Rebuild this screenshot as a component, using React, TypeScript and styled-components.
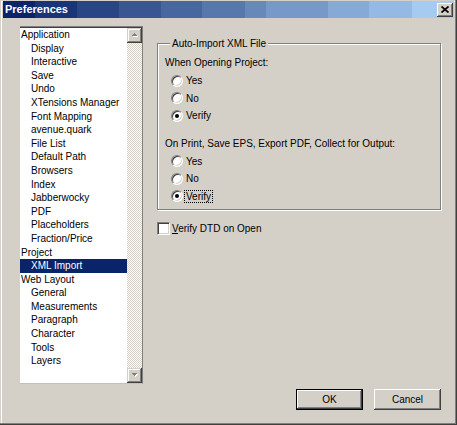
import React from 'react';
import styled, { createGlobalStyle } from 'styled-components';

const GlobalStyle = createGlobalStyle`
    html, body {
        margin: 0;
        padding: 0;
        background: #d4d0c8;
    }
    body {
        font-family: "Liberation Sans", Arial, sans-serif;
        font-size: 10px;
        color: #000;
    }
`;

const Window = styled.div`
    width: 457px;
    height: 425px;
    box-sizing: border-box;
    padding: 1px 3px 3px 3px;
    display: flex;
    flex-direction: column;
    background: #d4d0c8;
    box-shadow: inset -1px -1px #404040, inset -2px -2px #808080, inset 1px 1px #d4d0c8, inset 2px 2px #fff;
`;

// the title bar fades in visible steps, like a 16-bit colour screen
const TitleBar = styled.div`
    height: 17px;
    flex: none;
    display: flex;
    align-items: center;
    justify-content: space-between;
    padding: 0 1px 0 2px;
    background: linear-gradient(
        to right,
        #0a246a 0 32px,
        #1a3577 32px 74px,
        #294585 74px 116px,
        #395692 116px 158px,
        #4866a0 158px 199px,
        #5877ad 199px 242px,
        #6888ba 242px 263px,
        #7798c8 263px 325px,
        #87a9d5 325px 366px,
        #96b9e3 366px 409px,
        #a6caf0 409px
    );
`;

const Title = styled.span`
    color: #fff;
    font-weight: bold;
    font-size: 11px;
    line-height: 17px;
`;

const CloseButton = styled.div`
    width: 16px;
    height: 14px;
    display: flex;
    align-items: center;
    justify-content: center;
    background: #d4d0c8;
    box-shadow: inset -1px -1px #404040, inset 1px 1px #fff, inset -2px -2px #808080;
`;

const Main = styled.div`
    display: flex;
    margin-top: 8px;
    padding-left: 17px;
`;

const ListBox = styled.div`
    width: 123px;
    height: 358px;
    box-sizing: border-box;
    display: flex;
    border-top: 1px solid #808080;
    border-right: 1px solid #808080;
    border-bottom: 1px solid #c0c0c0;
    box-shadow: inset 0 1px #404040;
`;

const ListArea = styled.div`
    flex: 1;
    margin-top: 1px;
    background: #fff;
    overflow: hidden;
`;

const ListItem = styled.div<{ $level: number; $selected?: boolean }>`
    height: 13.6px;
    line-height: 13.6px;
    padding-left: ${(p) => 1 + p.$level * 10}px;
    white-space: nowrap;
    background: ${(p) => (p.$selected ? '#0a246a' : 'transparent')};
    color: ${(p) => (p.$selected ? '#fff' : '#000')};
`;

const ScrollBar = styled.div`
    width: 15px;
    margin-top: 1px;
    display: flex;
    flex-direction: column;
`;

const ScrollTrack = styled.div`
    flex: 1;
    background: repeating-conic-gradient(#fff 0 25%, #d4d0c8 0 50%) 0 0 / 2px 2px;
`;

const ScrollButton = styled.div`
    height: 15px;
    display: flex;
    align-items: center;
    justify-content: center;
    background: #d4d0c8;
    box-shadow: inset -1px -1px #404040, inset 1px 1px #d4d0c8, inset -2px -2px #808080, inset 2px 2px #fff;
`;

const RightPanel = styled.div`
    width: 284px;
    margin-left: 14px;
    display: flex;
    flex-direction: column;
`;

const GroupBox = styled.fieldset`
    margin: 11.5px 0 0 0;
    padding: 4.5px 0 4px 7px;
    min-width: 0;
    border: 1px solid #808080;
    box-shadow: inset 1px 1px #fff, 1px 1px #fff;
    display: flex;
    flex-direction: column;
`;

const Legend = styled.legend`
    margin-left: 5px;
    padding: 0 2px;
    line-height: 12px;
    background: #d4d0c8;
`;

const Caption = styled.div<{ $gap?: number }>`
    height: 18px;
    line-height: 18px;
    margin-top: ${(p) => p.$gap ?? 0}px;
`;

const RadioRow = styled.div`
    height: 17.5px;
    display: flex;
    align-items: center;
    padding-left: 6px;
`;

const RadioCircle = styled.span<{ $checked?: boolean }>`
    width: 12px;
    height: 12px;
    box-sizing: border-box;
    border-radius: 50%;
    border: 1px solid;
    border-color: #808080 #fff #fff #808080;
    box-shadow: inset 1px 1px #404040, inset -1px -1px #d4d0c8;
    background: #fff;
    display: flex;
    align-items: center;
    justify-content: center;
    flex: none;

    &::after {
        content: '';
        width: 4px;
        height: 4px;
        border-radius: 50%;
        background: ${(p) => (p.$checked ? '#000' : 'transparent')};
    }
`;

const OptionLabel = styled.span<{ $focused?: boolean }>`
    margin-left: 1px;
    padding: 0 1px;
    line-height: 11px;
    border: 1px ${(p) => (p.$focused ? 'dotted #000' : 'solid transparent')};
`;

const CheckRow = styled.div`
    height: 14px;
    margin-top: 11px;
    display: flex;
    align-items: center;
    gap: 2px;
`;

const CheckBox = styled.span`
    width: 13px;
    height: 13px;
    box-sizing: border-box;
    border: 1px solid;
    border-color: #808080 #fff #fff #808080;
    box-shadow: inset 1px 1px #404040, inset -1px -1px #d4d0c8;
    background: #fff;
    flex: none;
`;

const Mnemonic = styled.span`
    text-decoration: underline;
`;

const Footer = styled.div`
    display: flex;
    justify-content: flex-end;
    gap: 11px;
    margin-top: 5px;
    padding-right: 13px;
`;

const Button = styled.button<{ $default?: boolean }>`
    width: 67px;
    height: 21px;
    padding: 0;
    border: none;
    background: #d4d0c8;
    font-family: "Liberation Sans", Arial, sans-serif;
    font-size: 10px;
    color: #000;
    box-shadow: ${(p) =>
        p.$default
            ? 'inset 0 0 0 1px #000, inset -2px -2px #404040, inset 2px 2px #fff, inset -3px -3px #808080'
            : 'inset -1px -1px #404040, inset 1px 1px #fff, inset -2px -2px #808080, inset 2px 2px #d4d0c8'};
`;

const sections: [string, number][] = [
    ['Application', 0],
    ['Display', 1],
    ['Interactive', 1],
    ['Save', 1],
    ['Undo', 1],
    ['XTensions Manager', 1],
    ['Font Mapping', 1],
    ['avenue.quark', 1],
    ['File List', 1],
    ['Default Path', 1],
    ['Browsers', 1],
    ['Index', 1],
    ['Jabberwocky', 1],
    ['PDF', 1],
    ['Placeholders', 1],
    ['Fraction/Price', 1],
    ['Project', 0],
    ['XML Import', 1],
    ['Web Layout', 0],
    ['General', 1],
    ['Measurements', 1],
    ['Paragraph', 1],
    ['Character', 1],
    ['Tools', 1],
    ['Layers', 1],
];

function Arrow({ down }: { down?: boolean }) {
    return (
        <svg width="7" height="5" viewBox="0 0 7 5" shapeRendering="crispEdges">
            <polygon
                points={down ? '1,1 7,1 4,4' : '4,1 7,4 1,4'}
                fill="#fff"
            />
            <polygon
                points={down ? '0,0 6,0 3,3' : '3,0 6,3 0,3'}
                fill="#808080"
            />
        </svg>
    );
}

function Radio({ label, checked, focused }: { label: string; checked?: boolean; focused?: boolean }) {
    return (
        <RadioRow>
            <RadioCircle $checked={checked} />
            <OptionLabel $focused={focused}>{label}</OptionLabel>
        </RadioRow>
    );
}

export default function App() {
    return (
        <>
            <GlobalStyle />
            <Window>
                <TitleBar>
                    <Title>Preferences</Title>
                    <CloseButton>
                        <svg width="8" height="7" viewBox="0 0 8 7">
                            <path d="M0.5 0.5 L7.5 6.5 M7.5 0.5 L0.5 6.5" stroke="#000" strokeWidth="1.7" />
                        </svg>
                    </CloseButton>
                </TitleBar>
                <Main>
                    <ListBox>
                        <ListArea>
                            {sections.map(([name, level]) => (
                                <ListItem key={name} $level={level} $selected={name === 'XML Import'}>
                                    {name}
                                </ListItem>
                            ))}
                        </ListArea>
                        <ScrollBar>
                            <ScrollButton>
                                <Arrow />
                            </ScrollButton>
                            <ScrollTrack />
                            <ScrollButton>
                                <Arrow down />
                            </ScrollButton>
                        </ScrollBar>
                    </ListBox>
                    <RightPanel>
                        <GroupBox>
                            <Legend>Auto-Import XML File</Legend>
                            <Caption>When Opening Project:</Caption>
                            <Radio label="Yes" />
                            <Radio label="No" />
                            <Radio label="Verify" checked />
                            <Caption $gap={10}>On Print, Save EPS, Export PDF, Collect for Output:</Caption>
                            <Radio label="Yes" />
                            <Radio label="No" />
                            <Radio label="Verify" checked focused />
                        </GroupBox>
                        <CheckRow>
                            <CheckBox />
                            <span>
                                <Mnemonic>V</Mnemonic>erify DTD on Open
                            </span>
                        </CheckRow>
                    </RightPanel>
                </Main>
                <Footer>
                    <Button $default>OK</Button>
                    <Button>Cancel</Button>
                </Footer>
            </Window>
        </>
    );
}
